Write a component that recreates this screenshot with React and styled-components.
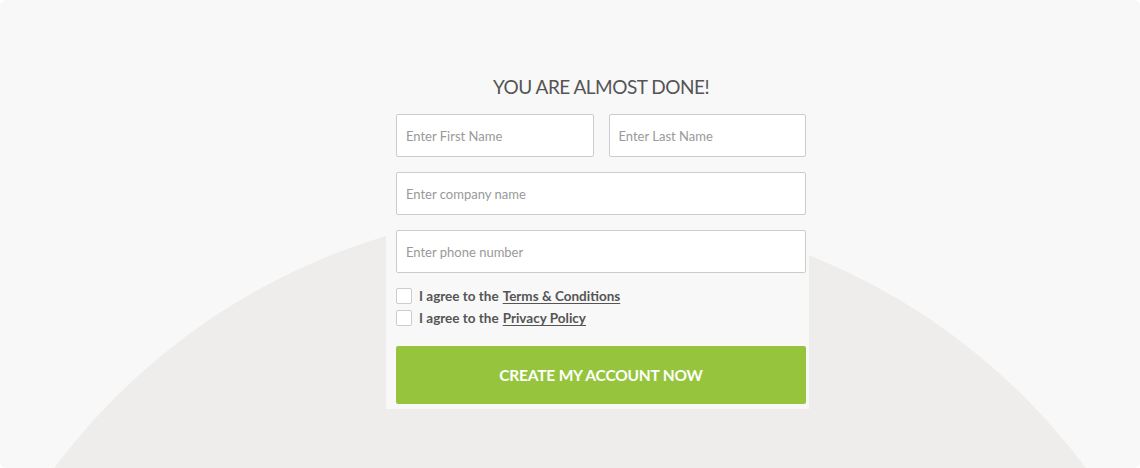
import React from 'react'
import styled, { createGlobalStyle } from 'styled-components'

const GlobalStyle = createGlobalStyle`
  html, body {
    margin: 0;
    padding: 0;
    background: #ffffff;
  }
  * {
    box-sizing: border-box;
  }
`

const Page = styled.div`
  position: relative;
  width: 1140px;
  height: 468px;
  overflow: hidden;
  background: #f8f8f8;
  border-radius: 6px;
  display: flex;
  justify-content: center;
  padding-left: 55px;
  font-family: Lato, "Noto Sans", sans-serif;

  &::before {
    content: '';
    position: absolute;
    left: 570px;
    top: 852px;
    width: 1286px;
    height: 1286px;
    margin: -643px 0 0 -643px;
    border-radius: 50%;
    background: #eeedeb;
  }
`

const Panel = styled.div`
  position: relative;
  z-index: 1;
  width: 423px;
  align-self: flex-start;
  margin-top: 59px;
  padding: 14px 3px 5px 10px;
  background: #f8f8f8;
`

const Title = styled.h1`
  margin: 0 0 13px;
  text-align: center;
  font-size: 19px;
  line-height: 28px;
  letter-spacing: -0.5px;
  font-weight: 400;
  color: #555555;
`

const Row = styled.div`
  display: flex;
  gap: 15px;
  margin-bottom: 15px;
`

const Input = styled.input`
  flex: 1;
  min-width: 0;
  width: 100%;
  height: 43px;
  padding: 0 9px;
  border: 1px solid #cccccc;
  border-radius: 2px;
  background: #ffffff;
  font-family: inherit;
  font-size: 13px;
  color: #555555;
  outline: none;

  &::placeholder {
    color: #999999;
  }
`

const Checks = styled.div`
  display: flex;
  flex-direction: column;
  gap: 6px;
  margin-bottom: 20px;
`

const CheckRow = styled.label`
  display: flex;
  align-items: center;
  gap: 7px;
  height: 16px;
  font-size: 13.5px;
  font-weight: 700;
  color: #555555;
`

const Box = styled.span`
  width: 16px;
  height: 16px;
  border: 1px solid #cccccc;
  border-radius: 2px;
  background: #ffffff;
  flex: none;
`

const Link = styled.a`
  color: #555555;
  text-decoration: underline;
  text-underline-offset: 2px;
  margin-left: 4px;
`

const Button = styled.button`
  display: block;
  width: 100%;
  height: 58px;
  border: none;
  border-radius: 2px;
  background: #96c53d;
  color: #ffffff;
  font-family: inherit;
  font-size: 15.5px;
  letter-spacing: -0.2px;
  font-weight: 700;
  cursor: pointer;
`

export default function App() {
  return (
    <>
      <GlobalStyle />
      <Page>
        <Panel>
          <Title>YOU ARE ALMOST DONE!</Title>
          <Row>
            <Input placeholder="Enter First Name" />
            <Input placeholder="Enter Last Name" />
          </Row>
          <Row>
            <Input placeholder="Enter company name" />
          </Row>
          <Row>
            <Input placeholder="Enter phone number" />
          </Row>
          <Checks>
            <CheckRow>
              <Box />
              <span>I agree to the<Link href="#">Terms &amp; Conditions</Link></span>
            </CheckRow>
            <CheckRow>
              <Box />
              <span>I agree to the<Link href="#">Privacy Policy</Link></span>
            </CheckRow>
          </Checks>
          <Button>CREATE MY ACCOUNT NOW</Button>
        </Panel>
      </Page>
    </>
  )
}
